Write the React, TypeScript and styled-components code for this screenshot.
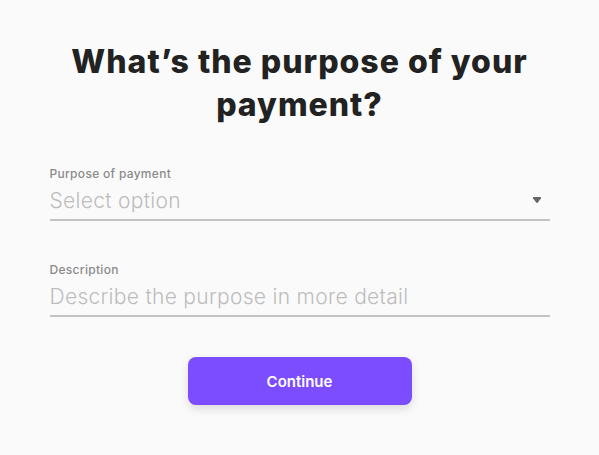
import styled, { createGlobalStyle } from "styled-components";

const GlobalStyle = createGlobalStyle`
  html, body {
    margin: 0;
    padding: 0;
    background: #fafafa;
    font-family: "Inter", "Noto Sans", sans-serif;
  }
`;

const Caret = () => (
  <svg width="10" height="7" viewBox="0 0 10 7">
    <path d="M1 1.2 Q0.6 0 2 0 H8 Q9.4 0 9 1.2 L5.8 5.6 Q5 6.6 4.2 5.6 Z" fill="#666" />
  </svg>
);

export default function App() {
  return (
    <>
      <GlobalStyle />
      <Page>
        <Title>What’s the purpose of your payment?</Title>
        <Form>
          <Field>
            <Label>Purpose of payment</Label>
            <InputRow>
              <Placeholder>Select option</Placeholder>
              <Caret />
            </InputRow>
          </Field>
          <Field>
            <Label>Description</Label>
            <InputRow>
              <Placeholder>Describe the purpose in more detail</Placeholder>
            </InputRow>
          </Field>
        </Form>
        <ContinueButton>Continue</ContinueButton>
      </Page>
    </>
  );
}

const Page = styled.div`
  width: 599px;
  height: 455px;
  display: flex;
  flex-direction: column;
  align-items: center;
  box-sizing: border-box;
  padding-top: 40px;
`;

const Title = styled.h1`
  margin: 0;
  width: 520px;
  text-align: center;
  font-size: 32px;
  line-height: 43px;
  font-weight: 800;
  color: #222;
  letter-spacing: 1px;
`;

const Form = styled.div`
  width: 500px;
  display: flex;
  flex-direction: column;
  gap: 42px;
  margin-top: 41px;
`;

const Field = styled.div`
  display: flex;
  flex-direction: column;
`;

const Label = styled.div`
  font-size: 12px;
  line-height: 14px;
  font-weight: 500;
  color: #8a8a8a;
  letter-spacing: 0.3px;
`;

const InputRow = styled.div`
  display: flex;
  align-items: center;
  justify-content: space-between;
  height: 37px;
  padding-top: 1px;
  padding-right: 8px;
  border-bottom: 2px solid #c2c2c2;
`;

const Placeholder = styled.span`
  font-size: 21px;
  font-weight: 300;
  color: #bdbdbd;
  letter-spacing: 0.3px;
`;

const ContinueButton = styled.button`
  margin-top: 40px;
  width: 224px;
  height: 48px;
  border: none;
  border-radius: 8px;
  background: #7c4dff;
  color: #fff;
  font-family: inherit;
  font-size: 15px;
  font-weight: 600;
  box-shadow: 0 4px 10px rgba(0, 0, 0, 0.12);
  cursor: pointer;
`;
